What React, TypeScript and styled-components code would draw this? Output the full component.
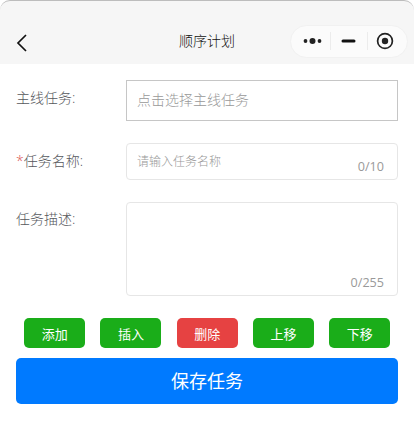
import styled, { createGlobalStyle } from 'styled-components';

const GlobalStyle = createGlobalStyle`
  html, body {
    margin: 0;
    padding: 0;
    background: #fff;
  }
  body {
    font-family: 'Open Sans', 'Noto Sans CJK SC', sans-serif;
  }
`;

const Page = styled.div`
  width: 414px;
  height: 448px;
  overflow: hidden;
  background: #fff;
`;

const NavBar = styled.div`
  position: relative;
  box-sizing: border-box;
  height: 64px;
  background: #f6f6f6;
  border-top: 1px solid #bdbdbd;
  border-radius: 10px 10px 0 0;
  display: flex;
  align-items: center;
  padding: 20px 6px 0 16px;
`;

const BackIcon = styled.svg`
  width: 12px;
  height: 20px;
  flex: none;
`;

const NavTitle = styled.div`
  position: absolute;
  left: 0;
  right: 0;
  top: 31px;
  text-align: center;
  font-size: 14px;
  font-weight: 300;
  line-height: 18px;
  color: #111;
`;

const Capsule = styled.div`
  margin-left: auto;
  box-sizing: border-box;
  width: 118px;
  height: 33px;
  margin-top: -3px;
  border-radius: 17px;
  background: #fbfbfb;
  border: 1px solid #f1f1f1;
  display: flex;
  align-items: center;
`;

const CapsuleCell = styled.div<{ $pl?: number; $pr?: number }>`
  box-sizing: border-box;
  flex: 1;
  height: 100%;
  padding: 0 ${({ $pr }) => $pr ?? 0}px 0 ${({ $pl }) => $pl ?? 0}px;
  display: flex;
  align-items: center;
  justify-content: center;
`;

const CapsuleDivider = styled.div`
  width: 1px;
  height: 18px;
  background: #ececec;
  flex: none;
`;

const Form = styled.div`
  padding: 16px 16px 0;
  display: flex;
  flex-direction: column;
`;

const Row = styled.div<{ $mb: number }>`
  display: flex;
  align-items: flex-start;
  margin-bottom: ${({ $mb }) => $mb}px;
`;

const Label = styled.div<{ $top: number }>`
  width: 110px;
  flex: none;
  font-size: 14px;
  font-weight: 300;
  line-height: 18px;
  padding-top: ${({ $top }) => $top}px;
  color: #55575c;
`;

const Star = styled.span`
  color: #d9534f;
`;

const Field = styled.div<{ $h: number; $plain?: boolean }>`
  position: relative;
  box-sizing: border-box;
  flex: 1;
  height: ${({ $h }) => $h}px;
  background: #fff;
  border: 1px solid ${({ $plain }) => ($plain ? '#c6c6c6' : '#e6e6e6')};
  border-radius: ${({ $plain }) => ($plain ? 0 : 4)}px;
`;

const Placeholder = styled.div<{ $size: number; $top: number }>`
  padding: ${({ $top }) => $top}px 0 0 10px;
  font-size: ${({ $size }) => $size}px;
  font-weight: 300;
  line-height: 18px;
  color: #999;
`;

const Counter = styled.span`
  position: absolute;
  right: 13px;
  bottom: 3px;
  font-size: 12.6px;
  line-height: 18px;
  color: #999;
`;

const ActionBar = styled.div`
  display: flex;
  gap: 15.25px;
  padding-left: 8.2px;
  margin-bottom: 10px;
`;

const ActionButton = styled.button<{ $danger?: boolean }>`
  width: 61px;
  height: 30px;
  padding: 0;
  border: none;
  border-radius: 5px;
  background: ${({ $danger }) => ($danger ? '#e64242' : '#1aad19')};
  color: #fff;
  font-family: inherit;
  font-size: 13px;
`;

const SaveButton = styled.button`
  height: 46px;
  padding: 0 0 2px;
  border: none;
  border-radius: 5px;
  background: #007aff;
  color: #fff;
  font-family: inherit;
  font-size: 18px;
`;

const actions = ['添加', '插入', '删除', '上移', '下移'];

export default function App() {
  return (
    <Page>
      <GlobalStyle />
      <NavBar>
        <BackIcon viewBox="0 0 12 20" fill="none">
          <path d="M10 2 L2 10 L10 18" stroke="#111" strokeWidth="1.7" />
        </BackIcon>
        <NavTitle>顺序计划</NavTitle>
        <Capsule>
          <CapsuleCell $pl={4}>
            <svg width="20" height="8" viewBox="0 0 20 8">
              <circle cx="2.5" cy="4" r="1.9" fill="#222" />
              <circle cx="9.5" cy="4" r="3" fill="#222" />
              <circle cx="16.5" cy="4" r="1.9" fill="#222" />
            </svg>
          </CapsuleCell>
          <CapsuleDivider />
          <CapsuleCell>
            <svg width="15" height="4" viewBox="0 0 15 4">
              <rect x="0.5" y="0.5" width="14" height="3" rx="1.5" fill="#111" />
            </svg>
          </CapsuleCell>
          <CapsuleDivider />
          <CapsuleCell $pr={4}>
            <svg width="18" height="18" viewBox="0 0 18 18">
              <circle cx="9" cy="9" r="7.4" fill="none" stroke="#222" strokeWidth="1.7" />
              <circle cx="9" cy="9" r="3.2" fill="#222" />
            </svg>
          </CapsuleCell>
        </Capsule>
      </NavBar>
      <Form>
        <Row $mb={22}>
          <Label $top={9}>主线任务:</Label>
          <Field $h={41} $plain>
            <Placeholder $size={14} $top={10}>点击选择主线任务</Placeholder>
          </Field>
        </Row>
        <Row $mb={22}>
          <Label $top={9}>
            <Star>*</Star>任务名称:
          </Label>
          <Field $h={37}>
            <Placeholder $size={12} $top={9}>请输入任务名称</Placeholder>
            <Counter>0/10</Counter>
          </Field>
        </Row>
        <Row $mb={22}>
          <Label $top={8}>任务描述:</Label>
          <Field $h={94}>
            <Counter>0/255</Counter>
          </Field>
        </Row>
        <ActionBar>
          {actions.map((text) => (
            <ActionButton key={text} $danger={text === '删除'}>
              {text}
            </ActionButton>
          ))}
        </ActionBar>
        <SaveButton>保存任务</SaveButton>
      </Form>
    </Page>
  );
}
